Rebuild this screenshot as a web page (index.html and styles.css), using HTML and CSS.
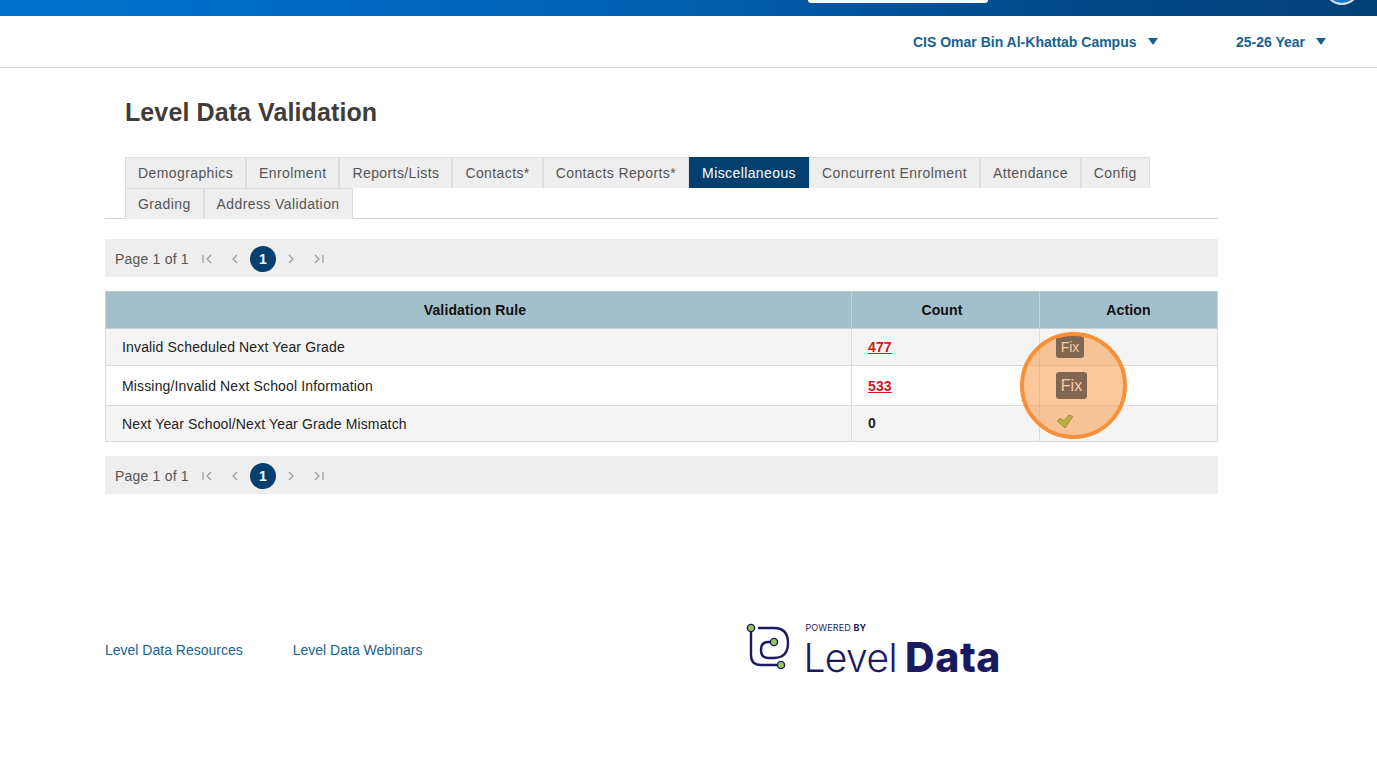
FILE: index.html
```html
<!DOCTYPE html>
<html lang="en">
<head>
<meta charset="utf-8">
<title>Level Data Validation</title>
<link rel="stylesheet" href="styles.css">
</head>
<body>
<header class="topbar">
  <div class="search"></div>
  <div class="avatar"></div>
</header>
<div class="subbar">
  <button class="picker picker-campus">CIS Omar Bin Al-Khattab Campus<span class="caret"></span></button>
  <button class="picker picker-year">25-26 Year<span class="caret"></span></button>
</div>
<main class="main">
  <h1 class="title">Level Data Validation</h1>
  <nav class="tabs">
    <a class="tab">Demographics</a><a class="tab">Enrolment</a><a class="tab">Reports/Lists</a><a class="tab">Contacts*</a><a class="tab">Contacts Reports*</a><a class="tab active">Miscellaneous</a><a class="tab">Concurrent Enrolment</a><a class="tab">Attendance</a><a class="tab">Config</a><a class="tab">Grading</a><a class="tab">Address Validation</a>
  </nav>
  <div class="pager pager-top">
    <span class="pager-label">Page 1 of 1</span>
    <svg class="pg pg-first" viewBox="0 0 12 12"><path d="M2 2v8M10 2L6 6l4 4"/></svg>
    <svg class="pg pg-prev" viewBox="0 0 12 12"><path d="M8 2L4 6l4 4"/></svg>
    <span class="pg-current">1</span>
    <svg class="pg pg-next" viewBox="0 0 12 12"><path d="M4 2l4 4-4 4"/></svg>
    <svg class="pg pg-last" viewBox="0 0 12 12"><path d="M2 2l4 4-4 4M10 2v8"/></svg>
  </div>
  <table class="grid">
    <thead>
      <tr><th class="c-rule">Validation Rule</th><th class="c-count">Count</th><th class="c-action">Action</th></tr>
    </thead>
    <tbody>
      <tr class="r1 odd"><td>Invalid Scheduled Next Year Grade</td><td class="count"><a class="count-link">477</a></td><td class="action"><span class="fix fix-sm">Fix</span></td></tr>
      <tr class="r2"><td>Missing/Invalid Next School Information</td><td class="count"><a class="count-link">533</a></td><td class="action"><span class="fix fix-lg">Fix</span></td></tr>
      <tr class="r3 odd"><td>Next Year School/Next Year Grade Mismatch</td><td class="count zero">0</td><td class="action">
        <svg class="check" viewBox="0 0 18 16"><path d="M1.300 7L4 4.200 8 6.800 13 1 16.700 2.500 9 14z"/></svg>
      </td></tr>
    </tbody>
  </table>
  <div class="pager pager-bottom">
    <span class="pager-label">Page 1 of 1</span>
    <svg class="pg pg-first" viewBox="0 0 12 12"><path d="M2 2v8M10 2L6 6l4 4"/></svg>
    <svg class="pg pg-prev" viewBox="0 0 12 12"><path d="M8 2L4 6l4 4"/></svg>
    <span class="pg-current">1</span>
    <svg class="pg pg-next" viewBox="0 0 12 12"><path d="M4 2l4 4-4 4"/></svg>
    <svg class="pg pg-last" viewBox="0 0 12 12"><path d="M2 2l4 4-4 4M10 2v8"/></svg>
  </div>
  <footer class="footer">
    <a class="foot-link">Level Data Resources</a>
    <a class="foot-link">Level Data Webinars</a>
    <div class="logo">
      <svg class="logo-mark" viewBox="0 0 44 50">
        <path class="lm" d="M5 9v24q0 10 10 10h17"/>
        <path class="lm" d="M13 6h15q14 0 14 15t-14 15h-6q-7 0-7-8t7-8h3"/>
        <circle class="ld" cx="5" cy="6" r="3.600"/>
        <circle class="ld" cx="28" cy="20" r="3.600"/>
        <circle class="ld" cx="35" cy="43" r="3.600"/>
      </svg>
      <div class="logo-text">
        <div class="logo-small">POWERED <b>BY</b></div>
        <div class="logo-big"><span class="logo-level">Level</span><b class="logo-data">Data</b></div>
      </div>
    </div>
  </footer>
</main>
<div class="spot"></div>
</body>
</html>
```
FILE: styles.css
```css
* { box-sizing: border-box; }
html, body { margin: 0; padding: 0; height: 100%; overflow: hidden; background: #fff; }
body { font-family: "Liberation Sans", Arial, sans-serif; font-size: 14px; color: #222; position: relative; }

.topbar {
  height: 16px; overflow: hidden; display: flex; align-items: flex-start;
  background: linear-gradient(90deg, #0072ce 0%, #0062b4 45%, #004b8c 75%, #00407a 100%);
  padding-left: 808px;
}
.search { width: 180px; height: 3px; background: #fff; border-radius: 0 0 3px 3px; }
.avatar {
  width: 36px; height: 36px; margin: -31px 0 0 336px; border-radius: 50%;
  border: 2px solid #cfe0ee; background: #1b74c4;
}
.subbar {
  height: 52px; border-bottom: 1px solid #d4d4d4; display: flex; align-items: center;
  padding-left: 913px;
}
.picker {
  border: 0; background: none; padding: 0; font: bold 14px "Liberation Sans", Arial, sans-serif;
  color: #17628f; display: flex; align-items: center;
}
.picker-year { margin-left: 78.500px; }
.caret {
  width: 0; height: 0; margin-left: 11px;
  border-left: 5px solid transparent; border-right: 5px solid transparent; border-top: 7px solid #17628f;
}
.main { width: 1113px; margin-left: 105px; }
.title { margin: 0; padding: 29px 0 0 20px; height: 89px; font-size: 25px; line-height: 30px; font-weight: bold; color: #403c3a; letter-spacing: .1px; }
.tabs {
  display: flex; flex-wrap: wrap; padding-left: 20px; padding-right: 60px;
  border-bottom: 1px solid #d0d0d0; height: 62px; align-content: flex-start;
}
.tab {
  height: 31px; padding: 0 12px; line-height: 30px; background: #eee; color: #555;
  border: 1px solid #ddd; border-bottom: 0; font-size: 14px; letter-spacing: .4px;
}
.tab.active { background: #03406f; color: #fff; border-color: #03406f; }
.pager {
  height: 38px; background: #eee; display: flex; align-items: center; padding: 1px 0 0 10px; color: #555; font-size: 14px;
}
.pager-label { letter-spacing: .2px; }
.pager-top { margin-top: 20px; }
.pager-bottom { margin-top: 14px; }
.pg { width: 12px; height: 12px; fill: none; stroke: #999; stroke-width: 1.200; flex: none; }
.pg-first { margin-left: 12px; }
.pg-prev { margin-left: 16px; }
.pg-next { margin-left: 9px; }
.pg-last { margin-left: 16px; }
.pg-current {
  width: 26px; height: 26px; border-radius: 50%; background: #03406f; color: #fff; font-weight: bold;
  display: flex; align-items: center; justify-content: center; margin-left: 9px;
}
.grid { width: 1113px; border-collapse: collapse; margin-top: 14px; table-layout: fixed; border: 1px solid #d8d8d8; }
.grid th { height: 37px; background: #a3bfcc; color: #111; font-size: 14px; font-weight: bold; letter-spacing: .15px; border: 1px solid #c6d3da; border-top-color: #b8c8d0; padding: 0; text-align: center; }
.grid .c-rule { width: 746px; padding-right: 7px; }
.grid .c-count { width: 188px; padding-right: 7px; }
.grid td { border: 1px solid #dcdcdc; padding: 0 16px; font-size: 14px; color: #222; letter-spacing: .15px; background: #fff; }
.grid .odd td { background: #f4f4f4; }
.r1 td { height: 37px; }
.r2 td { height: 40px; }
.r3 td { height: 36px; }
.grid .zero { padding-bottom: 2px; }
.count { font-weight: bold; color: #111; }
.count-link { color: #cc1a24; text-decoration: underline; }
.fix { display: inline-block; background: #073e6e; color: #fff; border-radius: 3px; text-align: center; vertical-align: middle; letter-spacing: 0; }
.fix-sm { width: 28px; height: 22px; line-height: 22px; font-size: 14px; margin-top: -1px; }
.fix-lg { width: 31px; height: 27px; line-height: 27px; font-size: 16px; margin-top: -1px; }
.check { width: 18px; height: 16px; display: block; margin-top: -4px; }
.check path { fill: #7fd040; stroke: #2a8c28; stroke-width: .9; stroke-linejoin: round; }
.footer { display: flex; align-items: center; margin-top: 128px; height: 56px; color: #17628f; }
.foot-link { color: #17628f; font-size: 14px; margin-right: 50px; }
.logo { display: flex; margin-left: 274px; color: #1c1a5e; align-items: flex-start; margin-top: -2px; }
.logo-mark { width: 44px; height: 50px; fill: none; margin-right: 15px; flex: none; }
.lm { stroke: #1c1a5e; stroke-width: 2.400; fill: none; stroke-linecap: round; }
.ld { fill: #9ac65a; stroke: #1c1a5e; stroke-width: 1.400; }
.logo-small { font: 9px/10px "Inter", "Liberation Sans", sans-serif; letter-spacing: .1px; margin-top: 1px; }
.logo-big { font-family: "Inter", "Liberation Sans", sans-serif; font-size: 39px; line-height: 38px; margin-top: 5px; margin-left: -2px; white-space: nowrap; }
.logo-level { font-weight: 300; letter-spacing: -.6px; }
.logo-data { font-weight: 800; font-size: 41px; margin-left: 8px; letter-spacing: .6px; }
.spot {
  position: absolute; left: 1020px; top: 332px; width: 107px; height: 107px; border-radius: 50%;
  background: rgba(247, 144, 56, .5); border: 4px solid #f79038;
}
```
